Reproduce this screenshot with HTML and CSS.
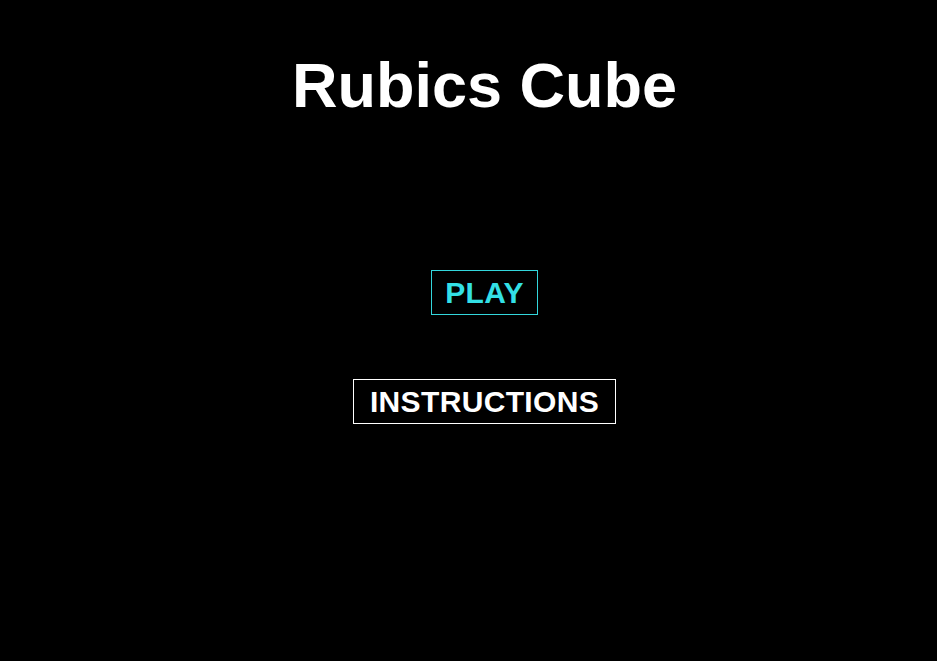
FILE: index.html
```html
<!DOCTYPE html>
<html>
<head>
<meta charset="utf-8">
<title>Rubics Cube</title>
<link rel="stylesheet" href="styles.css">
</head>
<body>
<main class="menu">
  <h1 class="title">Rubics Cube</h1>
  <div class="btn btn-play">PLAY</div>
  <div class="btn btn-instr">INSTRUCTIONS</div>
</main>
</body>
</html>
```

FILE: styles.css
```css
html, body {
  margin: 0;
  padding: 0;
  background: #000;
  height: 100%;
}
body {
  font-family: "Liberation Sans", Arial, sans-serif;
  color: #fff;
}
.menu {
  display: flex;
  flex-direction: column;
  align-items: center;
  padding-top: 48px;
  padding-left: 32px;
}
.title {
  margin: 0;
  font-size: 63px;
  font-weight: bold;
  line-height: 74px;
}
.btn {
  font-size: 30px;
  font-weight: bold;
  line-height: 35px;
  padding-top: 4px;
  padding-bottom: 4px;
  letter-spacing: 0.35px;
}
.btn-play {
  margin-top: 148px;
  color: #33e0e6;
  border: 1px solid #33d6dc;
  padding-left: 13px;
  padding-right: 13px;
}
.btn-instr {
  margin-top: 64px;
  color: #fff;
  border: 1px solid #fff;
  padding-left: 16px;
  padding-right: 16px;
}
```
